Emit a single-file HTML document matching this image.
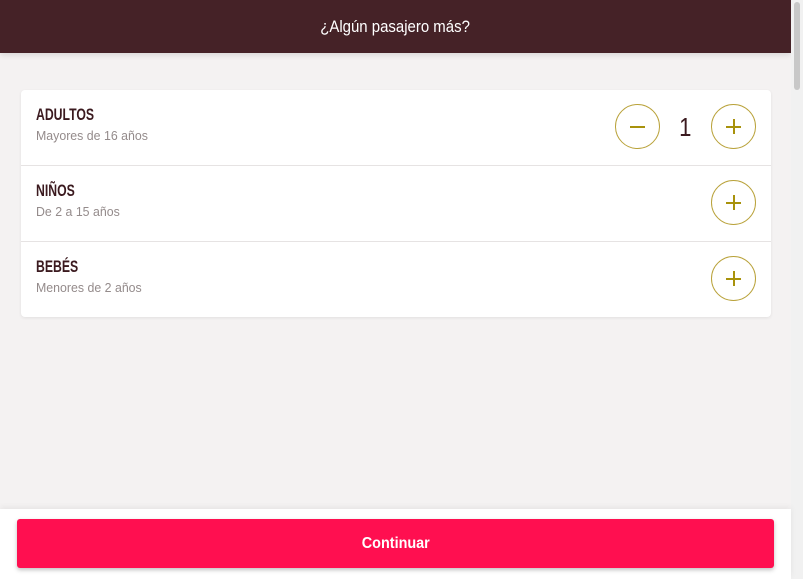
<!DOCTYPE html>
<html><head><meta charset="utf-8"><style>
*{margin:0;padding:0;box-sizing:border-box}
body{width:803px;height:579px;overflow:hidden;background:#f4f2f2;font-family:"Liberation Sans",sans-serif;position:relative}
.hdr{position:absolute;left:0;top:0;width:791px;height:53px;background:#452227;color:#fff;font-size:17px;text-align:center;line-height:53px;box-shadow:0 2px 6px rgba(0,0,0,.12)}
.hdr span{display:inline-block;transform:scaleX(.88)}
.sb{position:absolute;right:0;top:0;width:12px;height:579px;background:#f1f1f1}
.sb i{position:absolute;left:3px;top:2px;width:6px;height:88px;border-radius:3px;background:#c8c8c8}
.card{position:absolute;left:21px;top:90px;width:750px;height:227px;background:#fff;border-radius:4px;box-shadow:0 1px 3px rgba(0,0,0,.08)}
.row{position:relative;height:76px;border-bottom:1px solid #e6e3e3}
.row:last-child{border-bottom:none}
.t{position:absolute;left:15px;top:15px;font-weight:bold;font-size:17px;color:#3b1a1f;transform:scaleX(.72);transform-origin:0 0;white-space:nowrap}
.s{position:absolute;left:15px;top:38px;font-size:13px;color:#948b8b;transform:scaleX(.95);transform-origin:0 0;white-space:nowrap}
.c{position:absolute;top:14px;width:45px;height:45px;border:1.3px solid #b9a23a;border-radius:50%}
.c:before,.c:after{content:"";position:absolute;background:#a8920c;left:14px;top:21px;width:15px;height:2px}
.p:after{left:21px;top:14px;width:2px;height:15px}
.m:after{display:none}
.n{position:absolute;left:657px;top:22px;font-size:26px;color:#3b1a1f;transform:scaleX(.85)}
.bot{position:absolute;left:0;top:509px;width:791px;height:70px;background:#fff;box-shadow:0 -2px 6px rgba(0,0,0,.06)}
.btn{position:absolute;left:17px;top:10px;width:757px;height:49px;background:#ff0f50;border-radius:3px;color:#fff;font-weight:bold;font-size:16px;text-align:center;line-height:49px;box-shadow:0 2px 4px rgba(0,0,0,.25)}
.btn span{display:inline-block;transform:scaleX(.9)}
</style></head><body>
<div class="hdr"><span>¿Algún pasajero más?</span></div>
<div class="sb"><i></i></div>
<div class="card">
<div class="row"><div class="t">ADULTOS</div><div class="s">Mayores de 16 años</div><div class="c m" style="left:594px"></div><div class="n">1</div><div class="c p" style="left:690px"></div></div>
<div class="row"><div class="t">NIÑOS</div><div class="s">De 2 a 15 años</div><div class="c p" style="left:690px"></div></div>
<div class="row"><div class="t">BEBÉS</div><div class="s">Menores de 2 años</div><div class="c p" style="left:690px"></div></div>
</div>
<div class="bot"><div class="btn"><span>Continuar</span></div></div>
</body></html>
